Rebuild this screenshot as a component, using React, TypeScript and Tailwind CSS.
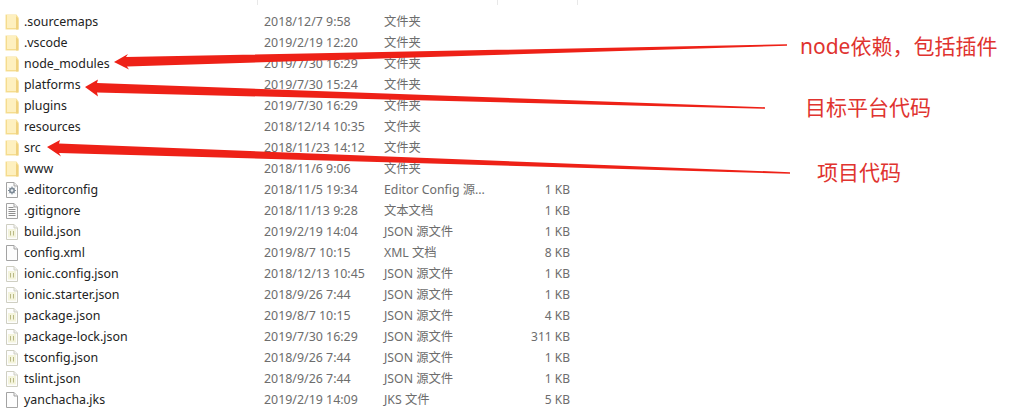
const FONT = "font-['Noto_Sans','Noto_Sans_CJK_SC',sans-serif]";

type Kind = 'folder' | 'gear' | 'text' | 'json' | 'blank';
const rows: [string, string, string, string, Kind][] = [
  ['.sourcemaps', '2018/12/7 9:58', '文件夹', '', 'folder'],
  ['.vscode', '2019/2/19 12:20', '文件夹', '', 'folder'],
  ['node_modules', '2019/7/30 16:29', '文件夹', '', 'folder'],
  ['platforms', '2019/7/30 15:24', '文件夹', '', 'folder'],
  ['plugins', '2019/7/30 16:29', '文件夹', '', 'folder'],
  ['resources', '2018/12/14 10:35', '文件夹', '', 'folder'],
  ['src', '2018/11/23 14:12', '文件夹', '', 'folder'],
  ['www', '2018/11/6 9:06', '文件夹', '', 'folder'],
  ['.editorconfig', '2018/11/5 19:34', 'Editor Config 源...', '1 KB', 'gear'],
  ['.gitignore', '2018/11/13 9:28', '文本文档', '1 KB', 'text'],
  ['build.json', '2019/2/19 14:04', 'JSON 源文件', '1 KB', 'json'],
  ['config.xml', '2019/8/7 10:15', 'XML 文档', '8 KB', 'blank'],
  ['ionic.config.json', '2018/12/13 10:45', 'JSON 源文件', '1 KB', 'json'],
  ['ionic.starter.json', '2018/9/26 7:44', 'JSON 源文件', '1 KB', 'json'],
  ['package.json', '2019/8/7 10:15', 'JSON 源文件', '4 KB', 'json'],
  ['package-lock.json', '2019/7/30 16:29', 'JSON 源文件', '311 KB', 'json'],
  ['tsconfig.json', '2018/9/26 7:44', 'JSON 源文件', '1 KB', 'json'],
  ['tslint.json', '2018/9/26 7:44', 'JSON 源文件', '1 KB', 'json'],
  ['yanchacha.jks', '2019/2/19 14:09', 'JKS 文件', '5 KB', 'blank'],
];

function FileIcon({ kind }: { kind: Kind }) {
  if (kind === 'folder') {
    return (
      <svg width="14" height="16" viewBox="0 0 14 16">
        <path d="M0.500 0.500h11l2 3v12h-13z" fill="#f7e29a" />
        <path d="M1 1h10v13.500H1z" fill="#fef0bf" />
        <path d="M1 1h1v13.500H1zM1 14h10v1H1z" fill="#f5dc8e" />
        <path d="M11 2.500l2.500 2v11H11z" fill="#f0d27f" />
      </svg>
    );
  }
  const line = kind === 'json' ? '#cfcfc2' : '#a3a3a3';
  return (
    <svg width="14" height="16" viewBox="0 0 14 16">
      <path d="M1.500 0.500h7.500l3.500 3.500v11.500H1.500z" fill="#fdfdfd" stroke={line} />
      <path d="M9 0.500v3.500h3.500" fill="#efefef" stroke={line} />
      {kind === 'text' && <path d="M3.500 4.500h5M3.500 6.500h7M3.500 8.500h7M3.500 10.500h7M3.500 12.500h7" stroke="#8f8f8f" />}
      {kind === 'json' && (
        <>
          <rect x="3" y="5" width="8" height="8.500" fill="#f4f4dc" />
          <path d="M5.500 7v4.500M8.500 7v4.500" stroke="#b9b985" />
        </>
      )}
      {kind === 'gear' && (
        <>
          <circle cx="7" cy="8.500" r="3" fill="#7d8a96" />
          <path d="M7 4.500v8M3 8.500h8M4.200 5.700l5.600 5.600M9.800 5.700l-5.600 5.600" stroke="#7d8a96" />
          <circle cx="7" cy="8.500" r="1.300" fill="#e8edf2" />
        </>
      )}
    </svg>
  );
}

export default function App() {
  return (
    <div className={`relative w-[1019px] h-[419px] overflow-hidden bg-white ${FONT}`}>
      <div className="flex h-[5px]">
        <div className="w-[258px] border-r border-[#e8e8e8]" />
        <div className="w-[240px] border-r border-[#e8e8e8]" />
        <div className="w-[80px] border-r border-[#e8e8e8]" />
      </div>
      <div className="pt-[6px] flex flex-col w-[600px]">
        {rows.map(([name, date, type, size, kind]) => (
          <div key={name} className="flex items-center h-[21px] text-[12px] leading-[21px] text-[#6d6d6d]">
            <div className="w-[24px] pl-[5px] flex items-center">
              <FileIcon kind={kind} />
            </div>
            <div className="w-[240px] text-[12.400px] text-[#222222]">{name}</div>
            <div className="w-[120px] text-[12.400px]">{date}</div>
            <div className="w-[116px] whitespace-nowrap text-[12.300px]">{type}</div>
            <div className="w-[70px] text-right">{size}</div>
          </div>
        ))}
      </div>

      <svg className="absolute inset-0" width="1019" height="419" viewBox="0 0 1019 419">
        <path d="M114 62L128 54L126 57L787 44.300L787 45.700L127 66.500L129 69.500Z" fill="#ee2117" />
        <path d="M85 87L98 79.500L97 83L765 107.200L765 108.800L97 92.500L98 96.500Z" fill="#ee2117" />
        <path d="M47 147L60 140L59 143.500L790 172.200L790 173.800L59 153L61 156.500Z" fill="#ee2117" />
      </svg>

      <div className="absolute left-[800px] top-[32px] text-[21px] leading-[28px] text-[#e0332f] whitespace-nowrap">node依赖，包括插件</div>
      <div className="absolute left-[805px] top-[93px] text-[21px] leading-[28px] text-[#e0332f] whitespace-nowrap">目标平台代码</div>
      <div className="absolute left-[817px] top-[158px] text-[21px] leading-[28px] text-[#e0332f] whitespace-nowrap">项目代码</div>
    </div>
  );
}
